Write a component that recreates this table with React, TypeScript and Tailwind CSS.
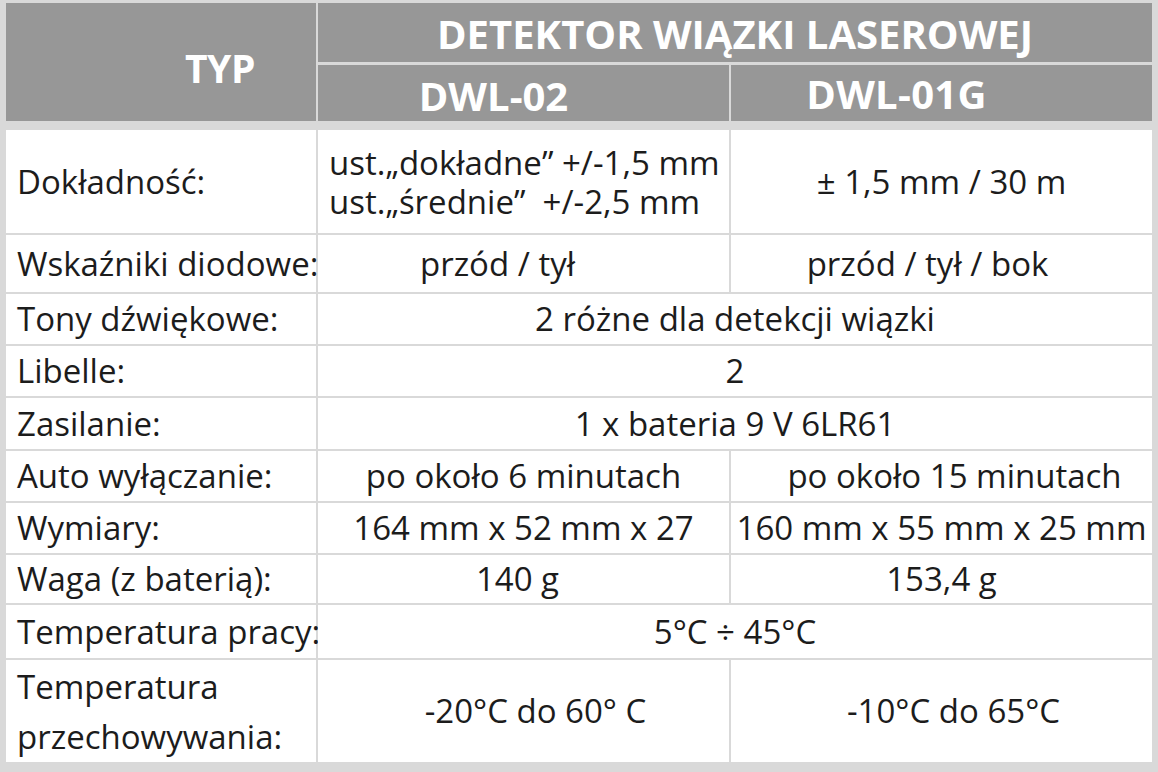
const font = { fontFamily: '"Open Sans", "Liberation Sans", sans-serif' };

type Row = {
  label: React.ReactNode;
  a?: React.ReactNode;
  b?: React.ReactNode;
  both?: React.ReactNode;
  h: string;
};

const rows: Row[] = [
  {
    label: "Dokładność:",
    a: (
      <div className="w-full pl-[11px] text-left leading-[39px] whitespace-pre">
        <div>ust.„dokładne” +/-1,5 mm</div>
        <div>ust.„średnie”  +/-2,5 mm</div>
      </div>
    ),
    b: "± 1,5 mm / 30 m",
    h: "h-[103px]",
  },
  { label: "Wskaźniki diodowe:", a: <span className="pr-[52px]">przód / tył</span>, b: <span className="pr-[28px]">przód / tył / bok</span>, h: "h-[57px]" },
  { label: "Tony dźwiękowe:", both: "2 różne dla detekcji wiązki", h: "h-[50px]" },
  { label: "Libelle:", both: "2", h: "h-[50px]" },
  { label: "Zasilanie:", both: "1 x bateria 9 V 6LR61", h: "h-[51px]" },
  { label: "Auto wyłączanie:", a: "po około 6 minutach", b: <span className="pl-[26px]">po około 15 minutach</span>, h: "h-[50px]" },
  { label: "Wymiary:", a: "164 mm x 52 mm x 27", b: "160 mm x 55 mm x 25 mm", h: "h-[50px]" },
  { label: "Waga (z baterią):", a: <span className="pr-[12px]">140 g</span>, b: "153,4 g", h: "h-[48px]" },
  { label: "Temperatura pracy:", both: "5°C ÷ 45°C", h: "h-[53px]" },
  {
    label: (
      <div className="leading-[50px] pt-[2px]">
        <div>Temperatura</div>
        <div>przechowywania:</div>
      </div>
    ),
    a: <span className="pl-[24px]">-20°C do 60° C</span>,
    b: <span className="pl-[24px]">-10°C do 65°C</span>,
    h: "h-[102px]",
  },
];

export default function App() {
  return (
    <div className="w-[1158px] h-[772px] bg-[#d9d9d9] pt-[3px] px-[6px] overflow-hidden" style={font}>
      {/* Header */}
      <div className="grid grid-cols-[310px_411px_421px] grid-rows-[59px_56px] gap-x-[2px] gap-y-[3px] text-white font-bold">
        <div className="row-span-2 bg-[#979797] flex items-center justify-center pl-[118px] pt-[12px] text-[39px] tracking-[-0.5px]">
          TYP
        </div>
        <div className="col-span-2 bg-[#979797] flex items-center justify-center pt-[2px] text-[40px]">
          DETEKTOR WIĄZKI LASEROWEJ
        </div>
        <div className="bg-[#979797] flex items-center justify-center pr-[60px] pt-[6px] text-[40px]">
          DWL-02
        </div>
        <div className="bg-[#979797] flex items-center justify-center pr-[90px] pt-[2px] text-[40px] tracking-[0.3px]">
          DWL-01G
        </div>
      </div>

      {/* Body */}
      <div className="mt-[9px] grid grid-cols-[310px_411px_421px] gap-[2px] text-[33px] text-[#1c1c1c]">
        {rows.map((r, i) => (
          <div key={i} className="contents">
            <div className={`${r.h} bg-white flex items-center pl-[11px] whitespace-nowrap`}>{r.label}</div>
            {r.both ? (
              <div className={`${r.h} col-span-2 bg-white flex items-center justify-center whitespace-nowrap`}>{r.both}</div>
            ) : (
              <>
                <div className={`${r.h} bg-white flex items-center justify-center whitespace-nowrap`}>{r.a}</div>
                <div className={`${r.h} bg-white flex items-center justify-center whitespace-nowrap`}>{r.b}</div>
              </>
            )}
          </div>
        ))}
      </div>
    </div>
  );
}
